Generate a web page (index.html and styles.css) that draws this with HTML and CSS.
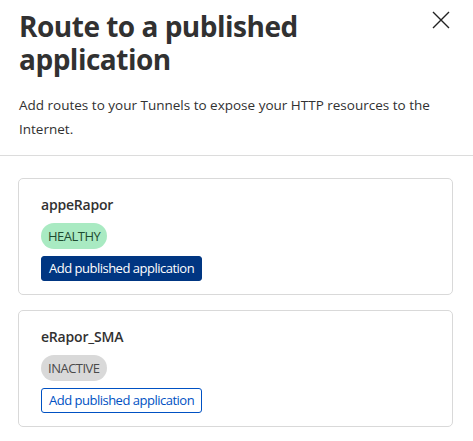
FILE: index.html
```html
<!DOCTYPE html>
<html>
<head>
<meta charset="utf-8">
<link rel="stylesheet" href="styles.css">
</head>
<body>
<div class="panel">
  <header class="header">
    <div class="title-row">
      <h1 class="title">Route to a published application</h1>
      <button class="close" aria-label="Close">
        <svg width="18" height="18" viewBox="0 0 18 18"><path d="M1 1 L17 17 M17 1 L1 17" stroke="#222" stroke-width="1.4" fill="none"/></svg>
      </button>
    </div>
    <p class="desc">Add routes to your Tunnels to expose your HTTP resources to the Internet.</p>
  </header>
  <div class="list">
    <div class="card">
      <div class="card-name">appeRapor</div>
      <span class="badge badge-healthy">HEALTHY</span>
      <button class="btn btn-primary">Add published application</button>
    </div>
    <div class="card">
      <div class="card-name">eRapor_SMA</div>
      <span class="badge badge-inactive">INACTIVE</span>
      <button class="btn btn-outline">Add published application</button>
    </div>
  </div>
</div>
</body>
</html>
```
FILE: styles.css
```css
* { box-sizing: border-box; }
html, body { margin: 0; background: #fff; }
body {
  font-family: "Open Sans", "Noto Sans", sans-serif;
  color: #313131;
  width: 473px;
  height: 441px;
  overflow: hidden;
}
.header {
  padding: 10px 19px 0 19px;
  border-bottom: 1px solid #dcdcdc;
  height: 156px;
}
.title-row {
  display: flex;
  justify-content: space-between;
  align-items: flex-start;
}
.title {
  margin: 0;
  font-size: 28px;
  line-height: 33px;
  font-weight: 700;
  letter-spacing: -0.5px;
  color: #313131;
}
.close {
  background: none;
  border: 0;
  padding: 0;
  margin: -2px 2px 0 0;
  width: 24px;
  height: 24px;
  display: flex;
  align-items: center;
  justify-content: center;
}
.desc {
  margin: 17px 0 0 0;
  font-size: 13.5px;
  line-height: 24px;
  color: #313131;
}
.list {
  padding: 22px 20px 0 18px;
  display: flex;
  flex-direction: column;
  gap: 15px;
}
.card {
  border: 1px solid #d9d9d9;
  border-radius: 5px;
  padding: 16px 22px 13px 22px;
  display: flex;
  flex-direction: column;
  align-items: flex-start;
  height: 117px;
}
.card-name {
  font-size: 14px;
  font-weight: 600;
  line-height: 20px;
  letter-spacing: -0.2px;
  color: #313131;
}
.badge {
  margin-top: 8px;
  height: 26px;
  padding: 0 7px;
  border-radius: 13px;
  font-size: 13px;
  line-height: 26px;
  letter-spacing: -0.5px;
}
.badge-healthy { background: #a9eac2; color: #1d4a30; }
.badge-inactive { background: #d9d9d9; color: #4a4a4a; }
.btn {
  margin-top: 7px;
  height: 25px;
  padding: 0 7px;
  font-family: inherit;
  font-size: 13px;
  letter-spacing: -0.5px;
  border-radius: 3px;
  line-height: 23px;
}
.btn-primary { background: #003682; color: #fff; border: 1px solid #003682; }
.btn-outline { background: #fff; color: #0051c3; border: 1px solid #0051c3; }
```
